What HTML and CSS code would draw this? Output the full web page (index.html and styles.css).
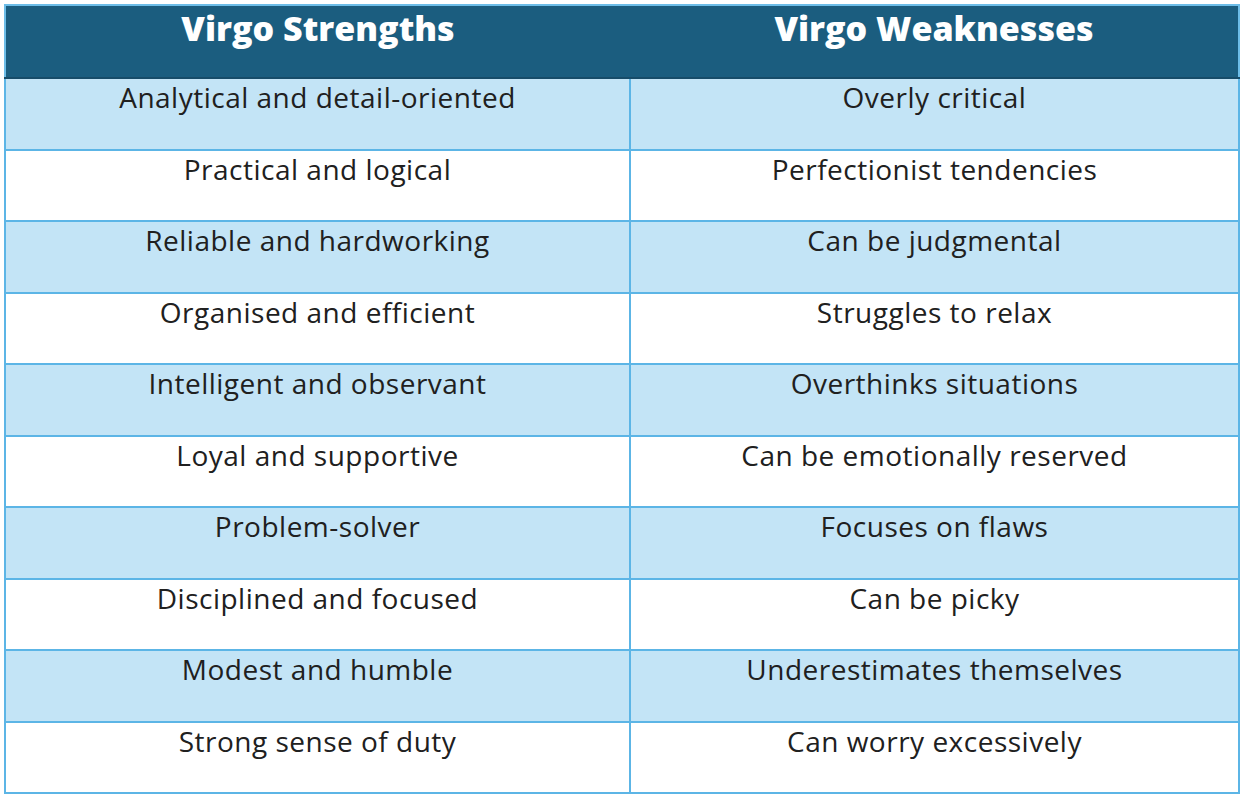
FILE: index.html
```html
<!DOCTYPE html>
<html lang="en">
<head>
<meta charset="utf-8">
<title>Virgo Strengths and Weaknesses</title>
<link rel="stylesheet" href="styles.css">
</head>
<body>
<div class="wrap">
<table class="traits">
  <colgroup><col class="col-left"><col class="col-right"></colgroup>
  <thead>
    <tr class="head-row"><th class="h-left">Virgo Strengths</th><th class="h-right">Virgo Weaknesses</th></tr>
  </thead>
  <tbody>
    <tr class="shade"><td>Analytical and detail-oriented</td><td>Overly critical</td></tr>
    <tr><td>Practical and logical</td><td>Perfectionist tendencies</td></tr>
    <tr class="shade"><td>Reliable and hardworking</td><td>Can be judgmental</td></tr>
    <tr><td>Organised and efficient</td><td>Struggles to relax</td></tr>
    <tr class="shade"><td>Intelligent and observant</td><td>Overthinks situations</td></tr>
    <tr><td>Loyal and supportive</td><td>Can be emotionally reserved</td></tr>
    <tr class="shade"><td>Problem-solver</td><td>Focuses on flaws</td></tr>
    <tr><td>Disciplined and focused</td><td>Can be picky</td></tr>
    <tr class="shade"><td>Modest and humble</td><td>Underestimates themselves</td></tr>
    <tr><td>Strong sense of duty</td><td>Can worry excessively</td></tr>
  </tbody>
</table>
</div>
</body>
</html>
```
FILE: styles.css
```css
html, body {
  margin: 0;
  padding: 0;
  background: #ffffff;
}
.wrap {
  padding: 4px 0 0 4px;
}
.traits {
  width: 1234px;
  border-collapse: collapse;
  table-layout: fixed;
  font-family: "Open Sans", "Liberation Sans", sans-serif;
}
.col-left { width: 625px; }
.col-right { width: 609px; }
.traits th {
  background: #1b5d7f;
  color: #ffffff;
  font-size: 34px;
  font-weight: 800;
  height: 73px;
  padding: 0;
  vertical-align: top;
  line-height: 45px;
  border-top: 2px solid #6dbde8;
  border-bottom: 2px solid #174c69;
  box-sizing: border-box;
}
.traits .h-left { border-left: 2px solid #6dbde8; }
.traits .h-right { border-right: 2px solid #6dbde8; }
.traits td {
  border: 2px solid #5cb5e6;
  height: 71.5px;
  box-sizing: border-box;
  padding: 2px 0 0 0;
  vertical-align: top;
  text-align: center;
  font-size: 28px;
  line-height: 32px;
  letter-spacing: 0.5px;
  color: #202020;
}
.traits .shade td {
  background: #c3e4f6;
}
```
